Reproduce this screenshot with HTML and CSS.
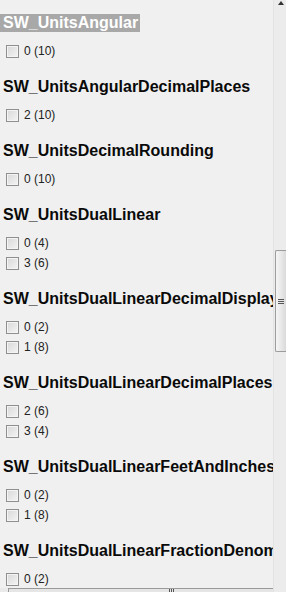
FILE: index.html
```html
<!DOCTYPE html>
<html lang="en">
<head>
    <meta charset="UTF-8">
    <title>Units</title>
    <link rel="stylesheet" href="styles.css">
</head>
<body>
    <div class="window">
        <div class="main">
            <div class="content">
                <div class="group">
                    <h2><span class="selected">SW_UnitsAngular</span></h2>
                    <label class="option"><span class="box"></span>0 (10)</label>
                </div>
                <div class="group">
                    <h2>SW_UnitsAngularDecimalPlaces</h2>
                    <label class="option"><span class="box"></span>2 (10)</label>
                </div>
                <div class="group">
                    <h2>SW_UnitsDecimalRounding</h2>
                    <label class="option"><span class="box"></span>0 (10)</label>
                </div>
                <div class="group">
                    <h2>SW_UnitsDualLinear</h2>
                    <label class="option"><span class="box"></span>0 (4)</label>
                    <label class="option"><span class="box"></span>3 (6)</label>
                </div>
                <div class="group">
                    <h2>SW_UnitsDualLinearDecimalDisplay</h2>
                    <label class="option"><span class="box"></span>0 (2)</label>
                    <label class="option"><span class="box"></span>1 (8)</label>
                </div>
                <div class="group">
                    <h2>SW_UnitsDualLinearDecimalPlaces</h2>
                    <label class="option"><span class="box"></span>2 (6)</label>
                    <label class="option"><span class="box"></span>3 (4)</label>
                </div>
                <div class="group">
                    <h2>SW_UnitsDualLinearFeetAndInches</h2>
                    <label class="option"><span class="box"></span>0 (2)</label>
                    <label class="option"><span class="box"></span>1 (8)</label>
                </div>
                <div class="group">
                    <h2>SW_UnitsDualLinearFractionDenominator</h2>
                    <label class="option"><span class="box"></span>0 (2)</label>
                </div>
            </div>
            <div class="hbar">
                <div class="hthumb"><span class="hgrip"></span></div>
            </div>
        </div>
        <div class="vbar">
            <div class="arrow-up"></div>
            <div class="vthumb"><span class="vgrip"></span></div>
        </div>
    </div>
</body>
</html>
```

FILE: styles.css
```css
body {
    margin: 0;
    background-color: #f0f0f0;
    font-family: 'Liberation Sans', Arial, sans-serif;
    color: #000;
}
.window {
    display: flex;
    width: 286px;
    height: 592px;
    overflow: hidden;
}
.main {
    width: 273px;
    display: flex;
    flex-direction: column;
}
.content {
    flex: 1;
    overflow: hidden;
    padding-top: 14px;
    white-space: nowrap;
}
.group {
    margin-bottom: 17px;
}
h2 {
    margin: 0 0 9px 0;
    padding-left: 3px;
    font-size: 16px;
    line-height: 18px;
    font-weight: bold;
    color: #0a0a0a;
}
.selected {
    display: inline-block;
    background-color: #a8a8a8;
    color: #fff;
    margin-left: -3px;
    padding: 0 2px 0 3px;
}
.option {
    display: flex;
    align-items: center;
    height: 20px;
    font-size: 12px;
    color: #222;
}
.box {
    width: 11px;
    height: 11px;
    margin: 0 5px 0 6px;
    border: 1px solid #8e8f8f;
    background: linear-gradient(135deg, #d8d8d8, #f4f4f4);
    box-shadow: inset 0 0 0 1px #f4f4f4;
}
.hbar {
    height: 4px;
    background-color: #eaeaea;
    padding-left: 8px;
}
.hthumb {
    height: 4px;
    border-top: 1px solid #9a9a9a;
    border-left: 1px solid #9a9a9a;
    background-color: #e6e6e6;
    display: flex;
    justify-content: center;
    padding-left: 60px;
}
.hgrip {
    width: 5px;
    height: 3px;
    background: repeating-linear-gradient(90deg, #555 0 1px, transparent 1px 2px);
}
.vbar {
    width: 12px;
    border-left: 1px solid #e3e3e3;
    background-color: #ececec;
    display: flex;
    flex-direction: column;
    align-items: center;
}
.arrow-up {
    width: 0;
    height: 0;
    margin-top: 1px;
    margin-left: 2px;
    border-left: 3px solid transparent;
    border-right: 3px solid transparent;
    border-bottom: 4px solid #333;
}
.vthumb {
    margin-top: 245px;
    width: 11px;
    height: 100px;
    margin-left: 1px;
    border: 1px solid #9c9c9c;
    border-right: none;
    border-radius: 2px 0 0 2px;
    background: linear-gradient(90deg, #f6f6f6, #e4e4e4 60%, #d6d6d6);
    display: flex;
    align-items: center;
    justify-content: center;
}
.vgrip {
    width: 6px;
    height: 5px;
    background: repeating-linear-gradient(180deg, #555 0 1px, transparent 1px 2px);
}
```
